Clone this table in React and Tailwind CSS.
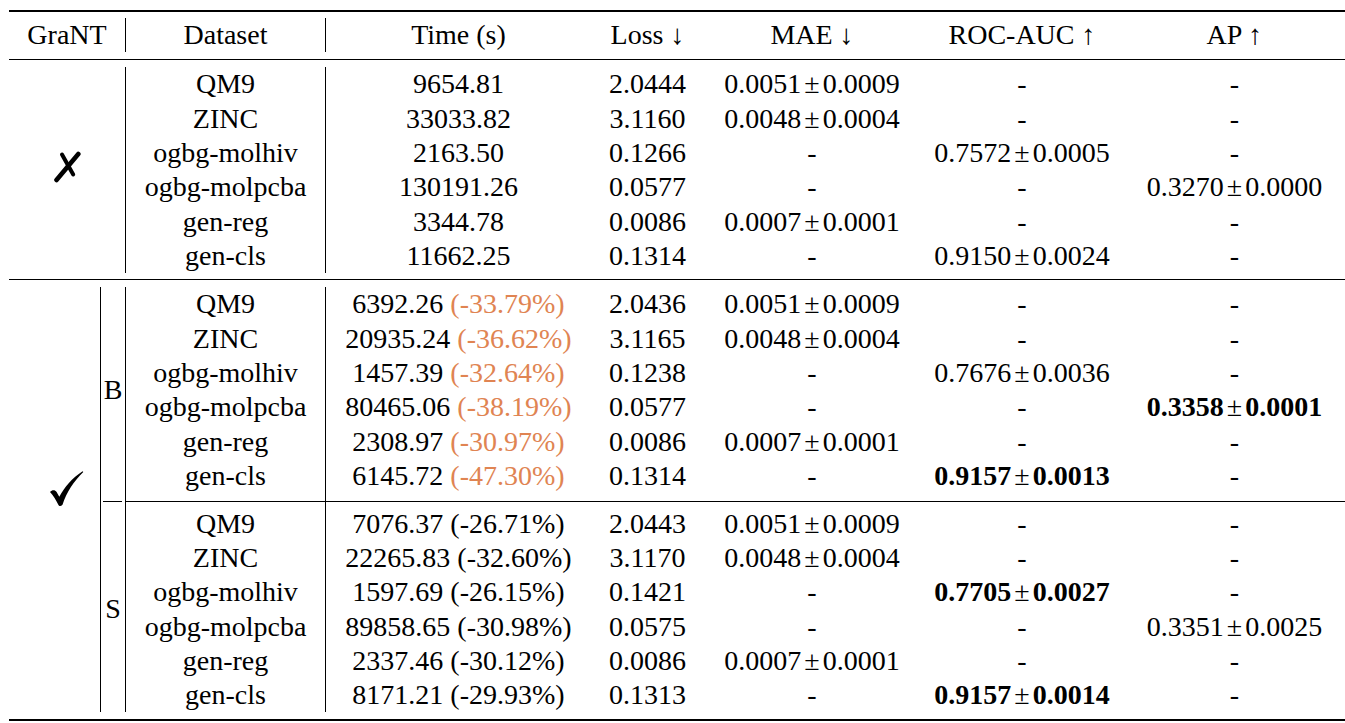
import React from "react";

const g1 = [
  ["QM9", "9654.81", "", "2.0444", "0.0051±0.0009", "-", "-"],
  ["ZINC", "33033.82", "", "3.1160", "0.0048±0.0004", "-", "-"],
  ["ogbg-molhiv", "2163.50", "", "0.1266", "-", "0.7572±0.0005", "-"],
  ["ogbg-molpcba", "130191.26", "", "0.0577", "-", "-", "0.3270±0.0000"],
  ["gen-reg", "3344.78", "", "0.0086", "0.0007±0.0001", "-", "-"],
  ["gen-cls", "11662.25", "", "0.1314", "-", "0.9150±0.0024", "-"],
];

const g2 = [
  ["QM9", "6392.26", "(-33.79%)", "2.0436", "0.0051±0.0009", "-", "-"],
  ["ZINC", "20935.24", "(-36.62%)", "3.1165", "0.0048±0.0004", "-", "-"],
  ["ogbg-molhiv", "1457.39", "(-32.64%)", "0.1238", "-", "0.7676±0.0036", "-"],
  ["ogbg-molpcba", "80465.06", "(-38.19%)", "0.0577", "-", "-", "*0.3358±0.0001"],
  ["gen-reg", "2308.97", "(-30.97%)", "0.0086", "0.0007±0.0001", "-", "-"],
  ["gen-cls", "6145.72", "(-47.30%)", "0.1314", "-", "*0.9157±0.0013", "-"],
];

const g3 = [
  ["QM9", "7076.37", "(-26.71%)", "2.0443", "0.0051±0.0009", "-", "-"],
  ["ZINC", "22265.83", "(-32.60%)", "3.1170", "0.0048±0.0004", "-", "-"],
  ["ogbg-molhiv", "1597.69", "(-26.15%)", "0.1421", "-", "*0.7705±0.0027", "-"],
  ["ogbg-molpcba", "89858.65", "(-30.98%)", "0.0575", "-", "-", "0.3351±0.0025"],
  ["gen-reg", "2337.46", "(-30.12%)", "0.0086", "0.0007±0.0001", "-", "-"],
  ["gen-cls", "8171.21", "(-29.93%)", "0.1313", "-", "*0.9157±0.0014", "-"],
];

function Val({ v }) {
  const bold = v.startsWith("*");
  const s = bold ? v.slice(1) : v;
  if (s.includes("±")) {
    const [a, b] = s.split("±");
    return (
      <span className={bold ? "font-bold" : ""}>
        {a}
        <span className="font-normal px-[3px]">±</span>
        {b}
      </span>
    );
  }
  return <span className={bold ? "font-bold" : ""}>{s}</span>;
}

const cell = "flex items-center justify-center whitespace-nowrap";

function DataCells({ row, orange }) {
  const [ds, t, pct, loss, mae, roc, ap] = row;
  return (
    <>
      <div className={`${cell} border-l border-black`}>{ds}</div>
      <div className={`${cell} border-l border-black`}>
        <span>
          {t}
          {pct && (
            <>
              {" "}
              <span className={orange ? "text-[#e08452]" : ""}>{pct}</span>
            </>
          )}
        </span>
      </div>
      <div className={cell}>{loss}</div>
      <div className={cell}>
        <Val v={mae} />
      </div>
      <div className={cell}>
        <Val v={roc} />
      </div>
      <div className={cell}>
        <Val v={ap} />
      </div>
    </>
  );
}

function Cross() {
  return (
    <svg width="29" height="33" viewBox="0 0 29 33">
      <path d="M25.3 3 L3.5 29" stroke="black" strokeWidth="4.6" strokeLinecap="round" fill="none" />
      <path d="M9 3.5 L20.2 23.5" stroke="black" strokeWidth="4" strokeLinecap="round" fill="none" />
    </svg>
  );
}

function Check() {
  return (
    <svg width="34" height="36" viewBox="0 0 34 36">
      <path
        d="M0 21 C2 18.8 5 18.6 6.6 21 C7.6 22.6 8.5 24.2 9.3 25.8 C14.5 16 22 7 32.6 0.2 L33.3 1.1 C24 10 16.5 21.5 12.6 33.6 C12 35.2 9.6 35.6 8.6 34.2 C6.2 29.4 3.6 24.8 0 21 Z"
        fill="black"
      />
    </svg>
  );
}

function Sep({ border, inner }) {
  return (
    <div className={`${border ? "border-l border-black" : ""} pt-[8px] ${inner || ""}`}>
      <div className="h-px bg-black" />
    </div>
  );
}

export default function App() {
  return (
    <div className="w-[1345px] h-[723px] overflow-hidden bg-white font-serif text-black">
      <div className="ml-[9px] w-[1336px] pt-[10px] text-[28px] leading-none font-['Liberation_Serif']">
        <div className="h-[2px] bg-black" />
        {/* header */}
        <div className="pt-[6px] pb-[7px]">
          <div className="grid grid-cols-[116px_200px_266px_113px_216px_204px_221px] grid-rows-[34px]">
            <div className={cell}>GraNT</div>
            <div className={`${cell} border-l border-black`}>Dataset</div>
            <div className={`${cell} border-l border-black`}>Time (s)</div>
            <div className={cell}>Loss ↓</div>
            <div className={cell}>MAE ↓</div>
            <div className={cell}>ROC-AUC ↑</div>
            <div className={cell}>AP ↑</div>
          </div>
        </div>
        <div className="h-px bg-black" />
        {/* group 1 */}
        <div className="pt-[7px] pb-[5.6px]">
          <div className="grid grid-cols-[116px_200px_266px_113px_216px_204px_221px] grid-rows-[repeat(6,34.4px)]">
            <div className="row-[span_6_/_span_6] flex items-center justify-center pb-[5px]">
              <Cross />
            </div>
            {g1.map((r, i) => (
              <DataCells key={i} row={r} />
            ))}
          </div>
        </div>
        <div className="h-px bg-black" />
        {/* groups 2 and 3 */}
        <div className="pt-[7px] pb-[6.8px]">
          <div className="grid grid-cols-[91px_25px_200px_266px_113px_216px_204px_221px] grid-rows-[repeat(6,34.4px)_13.6px_repeat(6,34.2px)]">
            <div className="row-[span_13_/_span_13] flex justify-end items-start pr-[16px] pt-[184px]">
              <Check />
            </div>
            <div className="row-[span_6_/_span_6] flex items-center justify-center border-l border-black">
              B
            </div>
            {g2.map((r, i) => (
              <DataCells key={i} row={r} orange />
            ))}
            <Sep border inner="pl-[2px] pr-[3px]" />
            <Sep border />
            <Sep border />
            <Sep />
            <Sep />
            <Sep />
            <Sep />
            <div className="row-[span_6_/_span_6] flex items-center justify-center border-l border-black">
              S
            </div>
            {g3.map((r, i) => (
              <DataCells key={i} row={r} />
            ))}
          </div>
        </div>
        <div className="h-[2px] bg-black" />
      </div>
    </div>
  );
}
